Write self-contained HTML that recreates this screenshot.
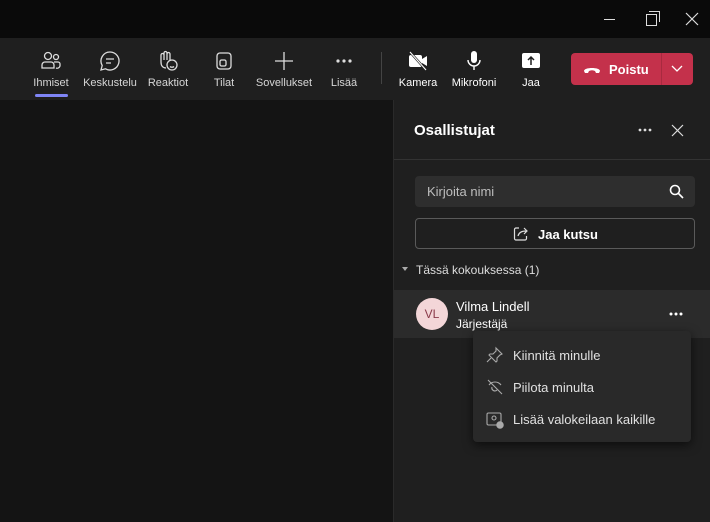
<!DOCTYPE html>
<html><head><meta charset="utf-8"><style>
*{margin:0;padding:0;box-sizing:border-box}
body{width:710px;height:522px;overflow:hidden;background:#141414;font-family:"Liberation Sans",sans-serif;color:#fff;position:relative}
.abs{position:absolute}
.tb{left:0;top:0;width:710px;height:38px;background:#0a0a0a}
.bar{left:0;top:38px;width:710px;height:62px;background:#1f1f1f}
.it{position:absolute;top:12px;text-align:center;font-size:11px;color:#d6d6d6;width:60px;margin-left:-30px}
.it svg{display:block;margin:0 auto 5px;width:22px;height:22px}
.panel{left:393px;top:100px;width:317px;height:422px;background:#1f1f1f;border-left:1px solid #2a2a2a}
.sm{font-size:13px}
</style></head><body>
<div class="abs tb">
<div class="abs" style="left:604px;top:19px;width:11px;height:1px;background:#ddd"></div>
<div class="abs" style="left:646px;top:14px;width:11px;height:12px;border:1.3px solid #ddd"></div>
<div class="abs" style="left:649px;top:11px;width:11px;height:11px;border-top:1.3px solid #ddd;border-right:1.3px solid #ddd"></div>
<svg class="abs" style="left:685px;top:12px" width="14" height="14"><path d="M1 1L13 13M13 1L1 13" stroke="#ddd" stroke-width="1.2"/></svg>
</div>
<div class="abs bar">
<div class="it" style="left:51px"><svg viewBox="0 0 22 22" fill="none" stroke="#ddd" stroke-width="1.3"><circle cx="8" cy="6" r="3.5"/><circle cx="16" cy="7" r="2.5"/><path d="M2 18v-3a3 3 0 0 1 3-3h6a3 3 0 0 1 3 3v3zM14 12h4a2 2 0 0 1 2 2v2a3 3 0 0 1-4 2"/></svg>Ihmiset</div>
<div class="abs" style="left:35px;top:56px;width:33px;height:3px;background:#7f85f5;border-radius:2px"></div>
<div class="it" style="left:110px"><svg viewBox="0 0 22 22" fill="none" stroke="#ddd" stroke-width="1.3"><path d="M11 2a9 9 0 1 1-4.5 16.8L2 20l1.2-4.5A9 9 0 0 1 11 2z"/><path d="M7 9h8M7 13h5"/></svg>Keskustelu</div>
<div class="it" style="left:168px"><svg viewBox="0 0 22 22" fill="none" stroke="#ddd" stroke-width="1.3"><path d="M4 12V5a1.5 1.5 0 0 1 3 0v5V3a1.5 1.5 0 0 1 3 0v7V4a1.5 1.5 0 0 1 3 0v6"/><path d="M4 12c0 4 2 6 5 6"/><circle cx="15" cy="15" r="5"/><path d="M13 16.5c1 1 3 1 4 0"/></svg>Reaktiot</div>
<div class="it" style="left:224px"><svg viewBox="0 0 22 22" fill="none" stroke="#ddd" stroke-width="1.3"><rect x="4" y="3" width="14" height="16" rx="3"/><rect x="7" y="10" width="6" height="6" rx="1.5"/></svg>Tilat</div>
<div class="it" style="left:284px"><svg viewBox="0 0 22 22" fill="none" stroke="#ddd" stroke-width="1.3"><path d="M11 2v18M2 11h18"/></svg>Sovellukset</div>
<div class="it" style="left:344px"><svg viewBox="0 0 22 22" fill="#ddd"><circle cx="5" cy="11" r="1.6"/><circle cx="11" cy="11" r="1.6"/><circle cx="17" cy="11" r="1.6"/></svg>Lisää</div>
<div class="abs" style="left:381px;top:14px;width:1px;height:32px;background:#444"></div>
<div class="it" style="left:418px;color:#fff"><svg viewBox="0 0 22 22"><rect x="2" y="5" width="13" height="12" rx="2" fill="#fff"/><path d="M15 9l5-3v10l-5-3z" fill="#fff"/><path d="M3 2l16 18" stroke="#1f1f1f" stroke-width="2.4"/><path d="M3 2l16 18" stroke="#fff" stroke-width="1.1"/></svg>Kamera</div>
<div class="it" style="left:474px;color:#fff"><svg viewBox="0 0 22 22"><rect x="8" y="1" width="6" height="12" rx="3" fill="#fff"/><path d="M5 10a6 6 0 0 0 12 0M11 16v4" stroke="#fff" stroke-width="1.4" fill="none"/></svg>Mikrofoni</div>
<div class="it" style="left:531px;color:#fff"><svg viewBox="0 0 22 22"><rect x="2" y="3" width="18" height="15" rx="2" fill="#fff"/><path d="M11 15V7M8 10l3-3 3 3" stroke="#1f1f1f" stroke-width="1.5" fill="none"/></svg>Jaa</div>
<div class="abs" style="left:571px;top:15px;width:122px;height:32px;background:#c4314b;border-radius:4px"></div>
<div class="abs" style="left:661px;top:15px;width:1px;height:32px;background:#a82a3f"></div>
<svg class="abs" style="left:583px;top:26px" width="18" height="10"><path d="M1 7c0-4 16-4 16 0l-1 2h-3l-1-2c-2-1-4-1-6 0l-1 2H2z" fill="#fff"/></svg>
<div class="abs" style="left:609px;top:24px;font-size:13px;font-weight:bold">Poistu</div>
<svg class="abs" style="left:671px;top:27px" width="12" height="8"><path d="M1 1l5 5 5-5" stroke="#fff" stroke-width="1.3" fill="none"/></svg>
</div>
<div class="abs panel">
<div class="abs" style="left:20px;top:22px;font-size:15px;font-weight:bold">Osallistujat</div>
<svg class="abs" style="left:244px;top:28px" width="14" height="4" fill="#ddd"><circle cx="2" cy="2" r="1.4"/><circle cx="7" cy="2" r="1.4"/><circle cx="12" cy="2" r="1.4"/></svg>
<svg class="abs" style="left:277px;top:24px" width="13" height="13"><path d="M1 1l11 11M12 1L1 12" stroke="#ddd" stroke-width="1.2"/></svg>
<div class="abs" style="left:0;top:59px;width:317px;height:1px;background:#333"></div>
<div class="abs" style="left:21px;top:76px;width:280px;height:31px;background:#2e2e2e;border-radius:4px"></div>
<div class="abs sm" style="left:33px;top:84px;color:#bdbdbd">Kirjoita nimi</div>
<svg class="abs" style="left:275px;top:84px" width="15" height="15" fill="none" stroke="#fff" stroke-width="1.6"><circle cx="6" cy="6" r="4.5"/><path d="M9.5 9.5l4.5 4.5"/></svg>
<div class="abs" style="left:21px;top:118px;width:280px;height:31px;border:1px solid #5a5a5a;border-radius:4px"></div>
<svg class="abs" style="left:119px;top:126px" width="16" height="15" fill="none" stroke="#ddd" stroke-width="1.2"><path d="M6 2H3a1.5 1.5 0 0 0-1.5 1.5v9A1.5 1.5 0 0 0 3 14h9a1.5 1.5 0 0 0 1.5-1.5V10"/><path d="M5 10c1-4 4-5 8-5M11 2l3 3-3 3"/></svg>
<div class="abs sm" style="left:144px;top:127px;font-weight:bold">Jaa kutsu</div>
<div class="abs" style="left:8px;top:167px;width:0;height:0;border-left:3px solid transparent;border-right:3px solid transparent;border-top:4px solid #aaa"></div>
<div class="abs" style="left:22px;top:163px;font-size:12px;color:#ddd">Tässä kokouksessa (1)</div>
<div class="abs" style="left:0;top:190px;width:317px;height:48px;background:#2b2b2b"></div>
<div class="abs" style="left:22px;top:198px;width:32px;height:32px;border-radius:50%;background:#f3d6d8;color:#8a3a4a;font-size:12px;text-align:center;line-height:32px">VL</div>
<div class="abs sm" style="left:62px;top:199px;color:#fff">Vilma Lindell</div>
<div class="abs" style="left:62px;top:217px;font-size:12px;color:#fff">Järjestäjä</div>
<svg class="abs" style="left:275px;top:212px" width="14" height="4" fill="#fff"><circle cx="2" cy="2" r="1.5"/><circle cx="7" cy="2" r="1.5"/><circle cx="12" cy="2" r="1.5"/></svg>
</div>
<div class="abs" style="left:473px;top:331px;width:218px;height:111px;background:#292929;border-radius:4px;box-shadow:0 3px 10px rgba(0,0,0,.6)">
<svg class="abs" style="left:13px;top:15px" width="18" height="18" fill="none" stroke="#aaa" stroke-width="1.1"><path d="M10 2l6 6-2 1-3 3 0 3-1 1-7-7 1-1h3l3-3z M5 12l-4 4"/></svg>
<div class="abs sm" style="left:40px;top:17px;color:#e0e0e0">Kiinnitä minulle</div>
<svg class="abs" style="left:13px;top:47px" width="18" height="18" fill="none" stroke="#aaa" stroke-width="1.1"><path d="M2 2l14 14M3 7c3-4 9-4 12 0M6 9a3 3 0 0 0 5 3"/></svg>
<div class="abs sm" style="left:40px;top:49px;color:#e0e0e0">Piilota minulta</div>
<svg class="abs" style="left:13px;top:80px" width="18" height="18" fill="none" stroke="#aaa" stroke-width="1.1"><rect x="1" y="2" width="14" height="12" rx="1.5"/><circle cx="8" cy="7" r="2"/><circle cx="14" cy="14" r="3.2" fill="#aaa"/></svg>
<div class="abs sm" style="left:40px;top:81px;color:#e0e0e0">Lisää valokeilaan kaikille</div>
</div>
</body></html>
